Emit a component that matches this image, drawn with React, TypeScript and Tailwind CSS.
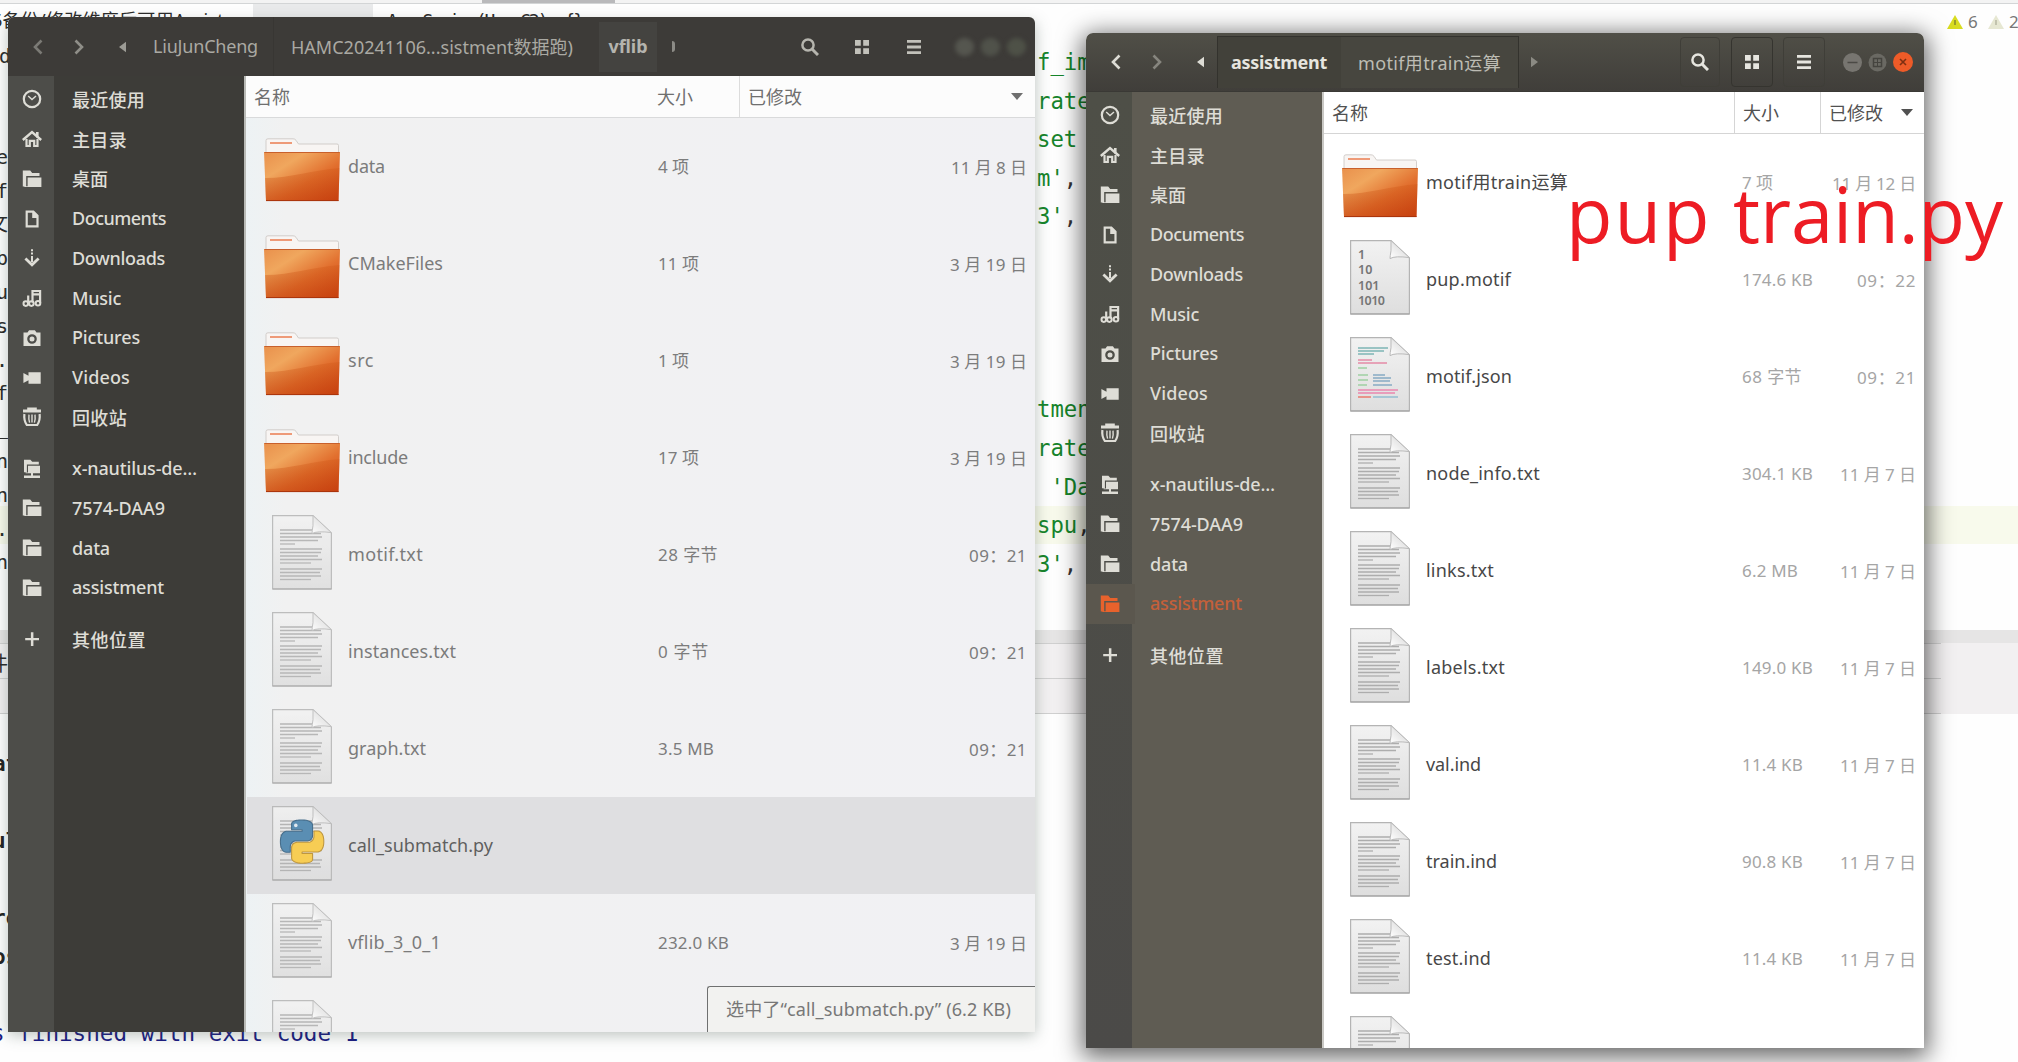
import React, { useLayoutEffect, useRef, useState } from 'react'

/* Text whose tracking is adjusted so that it fills a given width. */
function Fit({ w, className = '', children }: { w: number; className?: string; children: string }) {
  const ref = useRef<HTMLSpanElement>(null)
  const [spacing, setSpacing] = useState(0)
  useLayoutEffect(() => {
    const el = ref.current
    if (!el) return
    el.style.letterSpacing = '0px'
    const natural = el.getBoundingClientRect().width
    const next = (w - natural) / Math.max(1, [...children].length)
    setSpacing(next)
    el.style.letterSpacing = `${next}px`
  }, [w, children])
  return (
    <span ref={ref} className={`inline-block whitespace-pre ${className}`} style={{ letterSpacing: `${spacing}px` }}>
      {children}
    </span>
  )
}

/* ---------- sidebar glyphs ---------- */
type Glyph = 'clock' | 'home' | 'folder' | 'doc' | 'down' | 'music' | 'camera' | 'video' | 'trash' | 'net' | 'plus'

function SideIcon({ kind }: { kind: Glyph }) {
  const s = { fill: 'none', stroke: 'currentColor', strokeWidth: 2 }
  return (
    <svg viewBox="0 0 20 20" className="h-5 w-5" fill="currentColor">
      {kind === 'clock' && (
        <g {...s}>
          <circle cx="10" cy="10" r="8.2" strokeWidth="2.2" />
          <path d="M6.2 7l3.800 3.500 4-3.500" strokeWidth="1.500" />
        </g>
      )}
      {kind === 'home' && (
        <>
          <path d="M.8 11L10 3l9.200 8" {...s} strokeWidth="2.400" />
          <path d="M14 3h2.600v5.500H14z" />
          <path d="M4.500 10v7h3.300v-5.200h4.400V17h3.300v-7" {...s} strokeWidth="2.200" />
        </>
      )}
      {kind === 'folder' && <path d="M.8 1.500h7.400l2 2.500h7.300v3H4.200v10.500H.8zM5.600 8.400h13.800v9.600H2.400v-.8h3.200z" />}
      {kind === 'doc' && <path d="M3.600 1.500h8.200l4.800 4.800v12.200h-13zM5.800 3.700v12.600h8.600V9h-4.200V3.700z" fillRule="evenodd" />}
      {kind === 'down' && (
        <>
          <path d="M9 1.200h2v2H9zM9 4.600h2v2H9zM9 8h2v6H9z" />
          <path d="M3.400 10.600l6.600 6.200 6.600-6.200" {...s} strokeWidth="2.800" />
        </>
      )}
      {kind === 'music' && (
        <>
          <path d="M10.500 14.500V3h7.600v12M10.500 6.400h7.600" {...s} strokeWidth="2.200" />
          <path d="M6.200 7.500v8" {...s} strokeWidth="2.200" />
          <circle cx="3.800" cy="15.600" r="2.300" {...s} />
          <circle cx="9.400" cy="15.600" r="2.300" {...s} />
          <circle cx="16" cy="15.200" r="2.300" {...s} />
        </>
      )}
      {kind === 'camera' && (
        <path
          fillRule="evenodd"
          d="M1.500 4.500h4l1.600-2.300h5.800l1.600 2.300h4v13.400h-17zM10 6.200a4.800 4.800 0 100 9.600 4.800 4.800 0 000-9.600zm0 2.300a2.500 2.500 0 110 5 2.500 2.500 0 010-5z"
        />
      )}
      {kind === 'video' && <path d="M6.500 4.200h12.200v11.600H6.500v-3.600L1.400 15V5l5.100 2.800z" />}
      {kind === 'trash' && (
        <>
          <path d="M5.200.6h9.600v2H19v3H1v-3h4.200z" />
          <path d="M2.400 7c-.5 4 0 7.500 2.400 11h10.400c2.400-3.500 2.900-7 2.400-11" {...s} strokeWidth="2.200" />
          <path d="M7 7.600c-.4 3-.2 5.500.6 8M10 7.600v8M13 7.600c.4 3 .2 5.500-.6 8" {...s} strokeWidth="1.400" />
        </>
      )}
      {kind === 'net' && (
        <path d="M2 .8h6.400l1.800 2h6.600v2.800H4.900v7.600H2zM6 6.800h12v7.400h-7v2.400h7v2.400H2v-2.400h7v-2.400H3.600v-.6H6z" />
      )}
      {kind === 'plus' && <path d="M8.900 3.300h2.500v5.600H17v2.400h-5.600V17H8.900v-5.700H3.200V8.900h5.700z" />}
    </svg>
  )
}

const places: { icon: Glyph; label: string; w: number; gap?: boolean; cjk?: boolean }[] = [
  { icon: 'clock', label: '最近使用', w: 73, cjk: true },
  { icon: 'home', label: '主目录', w: 55, cjk: true },
  { icon: 'folder', label: '桌面', w: 36, cjk: true },
  { icon: 'doc', label: 'Documents', w: 94 },
  { icon: 'down', label: 'Downloads', w: 93 },
  { icon: 'music', label: 'Music', w: 49 },
  { icon: 'camera', label: 'Pictures', w: 68 },
  { icon: 'video', label: 'Videos', w: 58 },
  { icon: 'trash', label: '回收站', w: 55, cjk: true },
  { icon: 'net', label: 'x-nautilus-de…', w: 125, gap: true },
  { icon: 'folder', label: '7574-DAA9', w: 93 },
  { icon: 'folder', label: 'data', w: 38 },
  { icon: 'folder', label: 'assistment', w: 92 },
  { icon: 'plus', label: '其他位置', w: 74, gap: true, cjk: true },
]

function Sidebar({ strip, body, text, active }: { strip: string; body: string; text: string; active?: string }) {
  return (
    <div className={`relative w-[236px] shrink-0 ${body}`}>
      <div className={`absolute inset-y-0 left-0 w-[46px] ${strip}`} />
      <div className="relative flex flex-col pt-[3.500px]">
        {places.map((p) => {
          const on = p.label === active
          return (
            <div key={p.label} className={`flex h-[39.75px] items-center ${p.gap ? 'mt-[11.500px]' : ''} ${on ? 'text-[#e8622c]' : text}`}>
              <div className={`flex h-full w-[49px] items-center justify-center pr-px ${on ? 'bg-[#5b574e]' : ''}`}>
                <SideIcon kind={p.icon} />
              </div>
              <Fit w={p.w} className={`ml-[15px] text-[18px] font-medium leading-none ${p.cjk ? 'pt-px' : 'pb-px'} ${on ? 'text-[#c4603a]' : ''}`}>
                {p.label}
              </Fit>
            </div>
          )
        })}
      </div>
    </div>
  )
}

/* ---------- file icons ---------- */
function Folder() {
  return (
    <svg viewBox="0 0 76 64" className="h-[64px] w-[76px]">
      <defs>
        <linearGradient id="fo" x1="0" y1="0" x2="1" y2="1">
          <stop offset="0" stopColor="#e9904c" />
          <stop offset=".28" stopColor="#f0a75e" />
          <stop offset=".6" stopColor="#e2702f" />
          <stop offset="1" stopColor="#cb3f12" />
        </linearGradient>
        <linearGradient id="fb" x1="0" y1="0" x2="0" y2="1">
          <stop offset="0" stopColor="#c9500f" stopOpacity=".25" />
          <stop offset="1" stopColor="#c2400c" stopOpacity=".5" />
        </linearGradient>
      </defs>
      <path d="M2 16V2.500Q2 .8 4 .8h25q2 0 3 1.500l2.500 3.700H73q1.500 0 1.500 1.500V16z" fill="#f8f5f3" stroke="#c9c4c0" strokeWidth=".8" />
      <path d="M6 5h22" stroke="#ee9a78" strokeWidth="2" />
      <path d="M0 14h76l-1.500 49H2z" fill="url(#fo)" />
      <path d="M1 40C28 40 48 32 75.500 30L74.500 63H2z" fill="url(#fb)" />
      <path d="M.5 14.500h75" stroke="#c8602c" strokeWidth="1" />
      <path d="M2 62.600h72.500" stroke="#a8330c" strokeWidth="1" />
    </svg>
  )
}

type Kind = 'folder' | 'text' | 'binary' | 'json' | 'python'

const textLines: [number, number][] = [
  [15, 42], [18.5, 41], [22, 42], [25.5, 38], [29, 15],
  [34, 42], [37.5, 41], [41, 38], [44.5, 42], [48, 31],
  [54, 42], [57.5, 40], [61, 41], [64.5, 31],
]

const snake =
  'M14.250.18l.9.2.73.26.59.3.45.32.34.34.25.34.16.33.1.3.04.26.02.2-.01.13V8.500l-.05.63-.13.55-.21.46-.26.38-.3.31-.33.25-.35.19-.35.14-.33.1-.3.07-.26.04-.21.02H8.770l-.69.05-.59.14-.5.22-.41.27-.33.32-.27.35-.2.36-.15.37-.1.35-.07.32-.04.27-.02.21v3.060H3.170l-.21-.03-.28-.07-.32-.12-.35-.18-.36-.26-.36-.36-.35-.46-.32-.59-.28-.73-.21-.88-.14-1.050-.05-1.230.06-1.220.16-1.040.24-.87.32-.71.36-.57.4-.44.42-.33.42-.24.4-.16.36-.1.32-.05.24-.01h.16l.06.01h8.160v-.83H6.180l-.01-2.750-.02-.37.05-.34.11-.31.17-.28.25-.26.31-.23.38-.2.44-.18.51-.15.58-.12.64-.1.71-.06.77-.04.84-.02 1.270.05z'

function Page({ kind, faded }: { kind: Kind; faded?: boolean }) {
  return (
    <svg viewBox="0 0 60 75" className={`h-[75px] w-[60px] ${faded ? 'opacity-85' : ''}`}>
      <defs>
        <linearGradient id="pg" x1="0" y1="0" x2="0" y2="1">
          <stop offset="0" stopColor="#f2f2f2" />
          <stop offset="1" stopColor="#dedede" />
        </linearGradient>
        <linearGradient id="cn" x1="0" y1="1" x2="1" y2="0">
          <stop offset="0" stopColor="#ffffff" />
          <stop offset="1" stopColor="#cfcfcf" />
        </linearGradient>
      </defs>
      <path d="M.6.6H41L59.400 18v56H.6z" fill="url(#pg)" stroke="#b4b4b4" strokeWidth="1.200" />
      <path d="M.6 74h58.800" stroke="#9a9a9a" strokeWidth="1.200" />
      {(kind === 'text' || kind === 'python') &&
        textLines.map(([y, w]) => <path key={y} d={`M8 ${y}h${w}`} stroke="#adadad" strokeWidth="1.300" />)}
      {kind === 'binary' && (
        <g fill="#757575" fontSize="12.500" fontWeight="600" fontFamily="Noto Sans">
          <text x="8" y="19">1</text>
          <text x="8" y="34">10</text>
          <text x="8" y="49.500">101</text>
          <text x="8" y="64.500" textLength="27">1010</text>
        </g>
      )}
      {kind === 'json' && (
        <g strokeWidth="1.500" fill="none">
          <path d="M8 11h30M8 14h26M8 17h16" stroke="#7db5b5" />
          <path d="M8 23h14M8 26h29" stroke="#e58aa6" />
          <path d="M8 31h9M8 38h10M8 43h10M8 48h9" stroke="#9ed0a2" />
          <path d="M23 38h12M23 41h18M23 44h17M23 48h19" stroke="#86abc4" />
          <path d="M8 53h40M8 56h37" stroke="#ea86ae" />
          <path d="M8 60h13" stroke="#ea7a6e" />
          <path d="M23 60h25" stroke="#93bdd0" />
        </g>
      )}
      <path d="M41 .6v10q-1 6-1 8 5-3 19.400-1z" fill="url(#cn)" stroke="#b9b9b9" strokeWidth="1" />
      {kind === 'python' && (
        <g transform="translate(8.500 14) scale(1.800)" strokeLinejoin="round">
          <path d={snake} fill="#4381ac" stroke="#2b5a7d" strokeWidth=".6" />
          <g transform="rotate(180 12 12)">
            <path d={snake} fill="#fccb3c" stroke="#b98a22" strokeWidth=".6" />
          </g>
          <circle cx="8.500" cy="3" r="1" fill="#dfeaf2" />
        </g>
      )}
    </svg>
  )
}

type Row = { kind: Kind; name?: string; nw?: number; size?: string; sw?: number; date?: string; dw?: number; on?: boolean }

function FileRow({ r, dim }: { r: Row; dim?: boolean }) {
  const nameColor = dim ? (r.on ? 'text-[#5f5f5f]' : 'text-[#7b7b7b]') : 'text-[#474747]'
  const metaColor = dim ? 'text-[#7c7c7c]' : 'text-[#a5a5a5]'
  return (
    <div className={`flex h-[97px] shrink-0 items-start ${r.on ? 'bg-[#dfdfe1]' : ''}`}>
      <div className={`flex shrink-0 justify-end ${dim ? 'w-[101px]' : 'w-[102px]'} ${r.kind === 'folder' ? 'pr-[8px] pt-[20px]' : 'pr-[16px] pt-[9px]'}`}>
        {r.kind === 'folder' ? <Folder /> : <Page kind={r.kind} faded={dim} />}
      </div>
      <div className={`h-[97px] shrink-0 pt-[37px] leading-[22px] ${dim ? 'w-[310px]' : 'w-[316px]'} ${nameColor}`}>
        {r.name && <Fit w={r.nw ?? 0} className="text-[18px]">{r.name}</Fit>}
      </div>
      <div className={`flex h-[97px] flex-1 justify-between pt-[38px] text-[17px] leading-[22px] ${dim ? 'pr-[8px]' : 'pr-[8px]'} ${metaColor}`}>
        <div>{r.size && <Fit w={r.sw ?? 0}>{r.size}</Fit>}</div>
        <div className="pt-px">{r.date && <Fit w={r.dw ?? 0}>{r.date}</Fit>}</div>
      </div>
    </div>
  )
}

const leftRows: Row[] = [
  { kind: 'folder', name: 'data', nw: 37, size: '4 项', sw: 31, date: '11 月 8 日', dw: 76 },
  { kind: 'folder', name: 'CMakeFiles', nw: 95, size: '11 项', sw: 41, date: '3 月 19 日', dw: 77 },
  { kind: 'folder', name: 'src', nw: 26, size: '1 项', sw: 31, date: '3 月 19 日', dw: 77 },
  { kind: 'folder', name: 'include', nw: 60, size: '17 项', sw: 41, date: '3 月 19 日', dw: 77 },
  { kind: 'text', name: 'motif.txt', nw: 75, size: '28 字节', sw: 60, date: '09：21', dw: 58 },
  { kind: 'text', name: 'instances.txt', nw: 108, size: '0 字节', sw: 51, date: '09：21', dw: 58 },
  { kind: 'text', name: 'graph.txt', nw: 78, size: '3.5 MB', sw: 56, date: '09：21', dw: 58 },
  { kind: 'python', name: 'call_submatch.py', nw: 145, on: true },
  { kind: 'text', name: 'vflib_3_0_1', nw: 93, size: '232.0 KB', sw: 71, date: '3 月 19 日', dw: 77 },
  { kind: 'text' },
]

const rightRows: Row[] = [
  { kind: 'folder', name: 'motif用train运算', nw: 142, size: '7 项', sw: 31, date: '11 月 12 日', dw: 84 },
  { kind: 'binary', name: 'pup.motif', nw: 85, size: '174.6 KB', sw: 71, date: '09：22', dw: 59 },
  { kind: 'json', name: 'motif.json', nw: 86, size: '68 字节', sw: 60, date: '09：21', dw: 59 },
  { kind: 'text', name: 'node_info.txt', nw: 114, size: '304.1 KB', sw: 71, date: '11 月 7 日', dw: 76 },
  { kind: 'text', name: 'links.txt', nw: 68, size: '6.2 MB', sw: 56, date: '11 月 7 日', dw: 76 },
  { kind: 'text', name: 'labels.txt', nw: 79, size: '149.0 KB', sw: 71, date: '11 月 7 日', dw: 76 },
  { kind: 'text', name: 'val.ind', nw: 55, size: '11.4 KB', sw: 61, date: '11 月 7 日', dw: 76 },
  { kind: 'text', name: 'train.ind', nw: 71, size: '90.8 KB', sw: 61, date: '11 月 7 日', dw: 76 },
  { kind: 'text', name: 'test.ind', nw: 65, size: '11.4 KB', sw: 61, date: '11 月 7 日', dw: 76 },
  { kind: 'text' },
]

/* ---------- toolbar glyphs ---------- */
function Chevron({ flip, className }: { flip?: boolean; className: string }) {
  return (
    <svg viewBox="0 0 12 16" className={`h-4 w-3 ${flip ? '-scale-x-100' : ''} ${className}`} fill="none" stroke="currentColor" strokeWidth="2.600">
      <path d="M9.500 1.500L3 8l6.500 6.500" />
    </svg>
  )
}
function Tri({ flip, className }: { flip?: boolean; className: string }) {
  return (
    <svg viewBox="0 0 8 14" className={`h-3.5 w-[7px] ${flip ? '-scale-x-100' : ''} ${className}`} fill="currentColor">
      <path d="M8 1v12L0 7z" />
    </svg>
  )
}
function Search({ className = '' }: { className?: string }) {
  return (
    <svg viewBox="0 0 18 18" className={`h-[18px] w-[18px] ${className}`} fill="none" stroke="currentColor">
      <circle cx="7" cy="7" r="5.600" strokeWidth="2.500" />
      <path d="M11 11l6 6" strokeWidth="3" />
    </svg>
  )
}
function Tiles({ className = '' }: { className?: string }) {
  return (
    <svg viewBox="0 0 14 14" className={`h-3.5 w-3.5 ${className}`} fill="currentColor">
      <path d="M0 0h5.800v5.800H0zM8.200 0H14v5.800H8.200zM0 8.200h5.800V14H0zM8.200 8.200H14V14H8.200z" />
    </svg>
  )
}
function Bars({ className = '' }: { className?: string }) {
  return (
    <svg viewBox="0 0 14 14" className={`h-3.5 w-3.5 ${className}`} fill="currentColor">
      <path d="M0 0h14v2.800H0zM0 5.600h14v2.800H0zM0 11.200h14V14H0z" />
    </svg>
  )
}
function SortArrow({ className }: { className: string }) {
  return (
    <svg viewBox="0 0 12 7" className={`h-[7px] w-3 ${className}`} fill="currentColor">
      <path d="M0 0h12L6 7z" />
    </svg>
  )
}

function LeftWindow() {
  return (
    <div className="absolute left-[8px] top-[17px] flex h-[1015px] w-[1027px] flex-col overflow-hidden rounded-t-[6px] bg-[#f0f0f1]">
      <div className="flex h-[59px] shrink-0 items-center bg-[#3d3b38] text-[#aaa9a3]">
        <Chevron className="ml-[24px] text-[#7b7a75]" />
        <Chevron flip className="ml-[29px] text-[#8f8e88]" />
        <Tri className="ml-[34px] text-[#9c9b95]" />
        <Fit w={105} className="ml-[27px] text-[18px]">LiuJunCheng</Fit>
        <div className="ml-[15px] h-full w-px bg-[#383633]" />
        <Fit w={282} className="ml-[17px] pt-px text-[18px]">HAMC20241106...sistment数据跑)</Fit>
        <div className="ml-[26px] flex h-[50px] w-[58px] items-center justify-center bg-[#444340]">
          <Fit w={39} className="text-[18px] font-bold text-[#b5b4ae]">vflib</Fit>
        </div>
        <div className="ml-[15px] h-[11px] w-[3px] rounded-r-full bg-[#8c8b86]" />
        <Search className="ml-[126px] text-[#b6b5ae]" />
        <Tiles className="ml-[36px] text-[#c2c1ba]" />
        <Bars className="ml-[38px] text-[#c2c1ba]" />
        <div className="ml-[34px] flex gap-[7px]">
          <div className="h-[18px] w-[19px] rounded-full bg-[#55564f] blur-[2px]" />
          <div className="h-[18px] w-[19px] rounded-full bg-[#50524a] blur-[2px]" />
          <div className="h-[18px] w-[19px] rounded-full bg-[#4e5147] blur-[2px]" />
        </div>
      </div>
      <div className="flex min-h-0 flex-1">
        <Sidebar strip="bg-[#4d4d49]" body="bg-[#3d3c38]" text="text-[#deddd6]" />
        <div className="flex min-w-0 flex-1 flex-col overflow-hidden border-l-2 border-[#b9bab6]">
          <div className="flex h-[42px] shrink-0 items-center border-b border-[#d9dadb] bg-[#fcfcfc] text-[#6f6f6f]">
            <Fit w={36} className="ml-[8px] pt-[2px] text-[18px]">名称</Fit>
            <Fit w={36} className="ml-[367px] pt-[2px] text-[18px]">大小</Fit>
            <div className="ml-[46px] h-full w-px bg-[#dcdcdc]" />
            <Fit w={54} className="ml-[8px] pt-[2px] text-[18px]">已修改</Fit>
            <SortArrow className="ml-auto mr-[12px]" />
          </div>
          <div className="flex min-h-0 flex-1 flex-col overflow-hidden bg-gradient-to-r from-[#edf2f4] via-[#f1f1f1] via-5% to-[#f1f1f4] pl-px">
            {leftRows.map((r, i) => (
              <FileRow key={i} r={r} dim />
            ))}
          </div>
        </div>
      </div>
      <div className="absolute bottom-0 right-0 flex h-[46px] w-[328px] items-center rounded-tl-[3px] border-l border-t border-[#6f7070] bg-[#f2f2f0] pl-[18px] text-[#777]">
        <Fit w={285} className="text-[18px]">选中了“call_submatch.py” (6.2 KB)</Fit>
      </div>
    </div>
  )
}

function RightWindow() {
  return (
    <div className="absolute left-[1086px] top-[33px] flex h-[1015px] w-[838px] flex-col overflow-hidden rounded-t-[7px] bg-white">
      <div className="flex h-[59px] shrink-0 items-center border-b border-[#3a3935] bg-gradient-to-b from-[#504f47] to-[#403e3a] text-[#e6e5df]">
        <Chevron className="ml-[24px] text-[#dddcd5]" />
        <Chevron flip className="ml-[29px] text-[#86857e]" />
        <Tri className="ml-[34px] text-[#dddcd5]" />
        <div className="ml-[13px] flex h-[52px] w-[124px] items-center justify-center border-l border-t border-[#33322d] bg-[#42413a] pr-px">
          <Fit w={96} className="text-[18px] font-bold">assistment</Fit>
        </div>
        <div className="flex h-[52px] w-[178px] items-center justify-center border-r border-t border-[#33322d] bg-[#47463f] pt-[2px]">
          <Fit w={143} className="text-[18px] text-[#bdbcb4]">motif用train运算</Fit>
        </div>
        <Tri flip className="ml-[12px] text-[#8b8a83]" />
        <div className="ml-auto flex h-[50px] w-[40px] items-center justify-center rounded-[4px] border border-[#3f3e38]">
          <Search />
        </div>
        <div className="ml-[11px] flex h-[50px] w-[42px] items-center justify-center rounded-[4px] border border-[#35342f]">
          <Tiles />
        </div>
        <div className="ml-[10px] flex h-[50px] w-[42px] items-center justify-center rounded-[4px] border border-[#3f3e38]">
          <Bars />
        </div>
        <div className="ml-[18px] mr-[11px] flex items-center gap-[6px]">
          <svg viewBox="0 0 19 19" className="h-[19px] w-[19px]"><circle cx="9.500" cy="9.500" r="9.500" fill="#777570" /><path d="M4.500 9.500h10" stroke="#4b4a45" strokeWidth="1.500" /></svg>
          <svg viewBox="0 0 19 19" className="h-[19px] w-[19px]"><circle cx="9.500" cy="9.500" r="9" fill="#6a6963" /><rect x="5.500" y="5.500" width="8" height="8" fill="none" stroke="#45443f" strokeWidth="1.500" /><path d="M9.500 6v7M6 9.500h7" stroke="#45443f" /></svg>
          <svg viewBox="0 0 20 20" className="h-[20px] w-[20px]"><circle cx="10" cy="10" r="10" fill="#ee5b28" /><path d="M7 7l6 6M13 7l-6 6" stroke="#7e2f12" strokeWidth="1.600" /></svg>
        </div>
      </div>
      <div className="flex min-h-0 flex-1">
        <Sidebar
          strip="bg-gradient-to-b from-[#4e4f47] to-[#4b4a48]"
          body="bg-[#5f5c53]"
          text="text-[#deddd6]"
          active="assistment"
        />
        <div className="flex min-w-0 flex-1 flex-col overflow-hidden border-l-2 border-[#c9c8c4]">
          <div className="flex h-[42px] shrink-0 items-center border-b border-[#d5d5d5] bg-white text-[#515151]">
            <Fit w={36} className="ml-[8px] pt-[2px] text-[18px]">名称</Fit>
            <div className="ml-auto h-full w-px bg-[#d5d5d5]" />
            <Fit w={36} className="ml-[8px] pt-[2px] text-[18px]">大小</Fit>
            <div className="ml-[41px] h-full w-px bg-[#d5d5d5]" />
            <Fit w={54} className="ml-[8px] pt-[2px] text-[18px]">已修改</Fit>
            <SortArrow className="ml-[18px] mr-[11px]" />
          </div>
          <div className="flex min-h-0 flex-1 flex-col overflow-hidden">
            {rightRows.map((r, i) => (
              <FileRow key={i} r={r} />
            ))}
          </div>
        </div>
      </div>
    </div>
  )
}

const codeLines = ['f_im', 'rate', 'set', "m',", "3',", '', '', '', '', 'tmen', 'rate', " 'Da", 'spu,', "3',"]
const gutter = ['ne', 'f', '文', 'b', 'u', 's', '.', 'f', 'e_', 'n', 'in', '.', 'n']
const consoleTail = ['at', '', 'ul', '', 'ro', 'os']

function Editor() {
  return (
    <div className="absolute inset-0 bg-[#fefefe]">
      <div className="flex h-[4px] border-b border-[#d3d5d6] bg-[#f3f3f3]">
        <div className="ml-[482px] h-[3px] w-[133px] bg-[#b9b9bb]" />
      </div>
      <div className="flex h-[24px] items-start whitespace-pre text-[18px] leading-[32px] text-[#2b2b2b]">
        <div className="w-[253px]"><Fit w={232} className="-ml-[8px]">6备份/修改维度后可用Assist</Fit></div>
        <div className="w-[120px] self-stretch bg-[#e9eaeb]" />
        <div className="pl-[14px]"><Fit w={195} className="font-['DejaVu_Sans_Mono',monospace] leading-[34px]">{'Avg Series(Hap C2): {}'}</Fit></div>
      </div>
      {/* highlighted caret line, splitter and tool window strip */}
      <div className="absolute left-0 right-0 top-[506px] h-[38px] bg-[#f8faec]" />
      <div className="absolute left-0 right-0 top-[630px] h-[13px] bg-[#e6e5e5]" />
      <div className="absolute left-0 right-0 top-[643px] h-[71px] bg-[#f2f0f1]">
        <div className="flex h-full w-[1941px] flex-col justify-between">
          <div className="h-px bg-[#d0d0d0]" />
          <div className="h-px bg-[#d0d0d0]" />
          <div className="h-px bg-[#d0d0d0]" />
        </div>
      </div>
      <div className="absolute left-0 top-[37px] w-[8px] font-['DejaVu_Sans_Mono','Noto_Sans_CJK_SC',monospace] text-[20px] text-[#2a2a2a]">
        <div className="flex h-[103px] items-start"><span className="-ml-px leading-[38px]">d</span></div>
        {gutter.map((g, i) => (
          <div key={i} className="flex h-[33.800px] items-center justify-end">{g}</div>
        ))}
        <div className="mt-[68px] flex h-[34px] items-center justify-end">件</div>
      </div>
      <div className="absolute left-0 top-[745px] w-[30px] font-['DejaVu_Sans_Mono',monospace] text-[21px] font-bold text-[#222]">
        {consoleTail.map((g, i) => (
          <div key={i} className="-ml-[7px] h-[38.500px] leading-[38px]">{g}</div>
        ))}
      </div>
      <div className="absolute left-[1037px] top-[43px] font-['DejaVu_Sans_Mono',monospace] text-[22.300px] text-[#16852b]">
        {codeLines.map((c, i) => (
          <div key={i} className="h-[38.600px] whitespace-pre leading-[38px]">
            {c.replace(/,$/, '')}
            {c.endsWith(',') && <span className="text-[#333]">,</span>}
          </div>
        ))}
      </div>
      <div className="absolute -left-[9px] top-[1016px] whitespace-pre font-['DejaVu_Sans_Mono',monospace] text-[22.600px] leading-[34px] text-[#1a1a84]">
        s finished with exit code 1
      </div>
      <div className="absolute right-0 top-[10px] flex items-center gap-[5px] text-[17px] leading-[24px] text-[#777]">
        <svg viewBox="0 0 16 14" className="h-3.5 w-4"><path d="M8 0l8 14H0z" fill="#d8dc20" /><path d="M8 5v5" stroke="#8c8e2a" strokeWidth="1.600" /></svg>
        <span className="w-[10px]">6</span>
        <svg viewBox="0 0 16 14" className="ml-[5px] h-3.5 w-4"><path d="M8 0l8 14H0z" fill="#e6e7d2" /><path d="M8 5v5" stroke="#b9baa5" strokeWidth="1.600" /></svg>
        <span className="w-[9px]">2</span>
      </div>
    </div>
  )
}

export default function App() {
  return (
    <div className="relative h-[1062px] w-[2018px] overflow-hidden bg-white font-['Noto_Sans','Noto_Sans_CJK_SC',sans-serif]">
      <Editor />
      <div className="absolute left-[8px] top-[20px] h-[1012px] w-[1027px] shadow-[0_3px_14px_rgba(60,80,70,0.35)]" />
      <div className="absolute left-[1086px] top-[33px] h-[1015px] w-[838px] rounded-t-[7px] shadow-[0_5px_24px_4px_rgba(0,0,0,0.6)]" />
      <LeftWindow />
      <RightWindow />
      <div className="absolute left-[1566px] top-[162px] flex font-['Open_Sans',sans-serif] text-[76px] font-medium leading-[104px] text-[#ed1c24]">
        <Fit w={167}>{'pup '}</Fit>
        <Fit w={270}>train.py</Fit>
      </div>
    </div>
  )
}
